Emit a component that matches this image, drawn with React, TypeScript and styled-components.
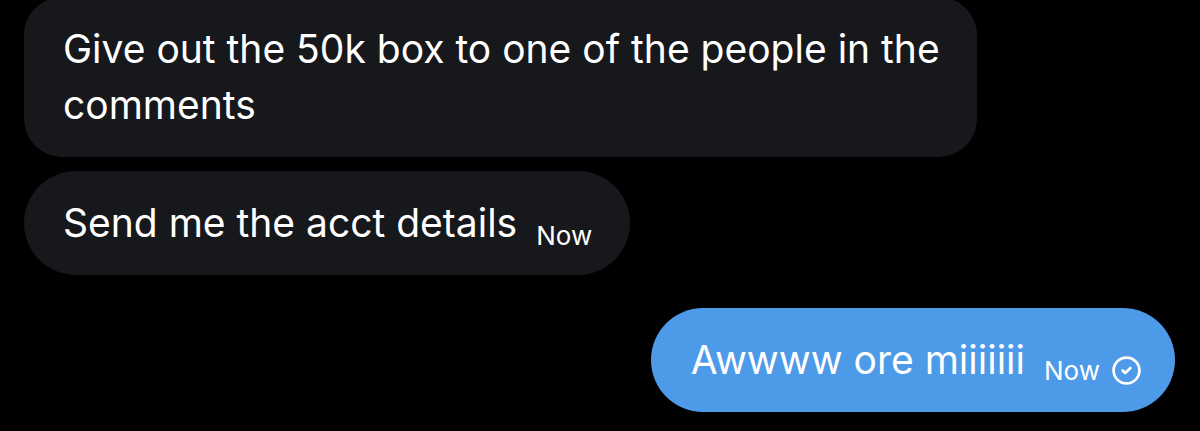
import React from "react";
import styled, { createGlobalStyle } from "styled-components";
import { CircleCheck } from "lucide-react";

const Global = createGlobalStyle`
  html, body {
    margin: 0;
    padding: 0;
    background: #000;
  }
  body {
    font-family: Inter, "Noto Sans", "Liberation Sans", sans-serif;
    -webkit-font-smoothing: antialiased;
  }
`;

const Thread = styled.div`
  display: flex;
  flex-direction: column;
  align-items: flex-start;
  padding: 0 25px 0 24px;
  margin-top: -3px;
  width: 1200px;
  height: 434px;
  box-sizing: border-box;
  overflow: hidden;
`;

const Bubble = styled.div<{ $mine?: boolean; $gap: number; $pill?: boolean; $padRight: number }>`
  box-sizing: border-box;
  max-width: 953px;
  margin-top: ${(p) => p.$gap}px;
  align-self: ${(p) => (p.$mine ? "flex-end" : "flex-start")};
  background: ${(p) => (p.$mine ? "#4c9ae8" : "#17181b")};
  color: #fff;
  border-radius: ${(p) => (p.$pill ? "53px" : "38px")};
  padding: 24px ${(p) => p.$padRight}px 24px ${(p) => (p.$mine ? 40 : 39)}px;
  display: flex;
  align-items: flex-end;
  gap: 19px;
`;

const Text = styled.span`
  font-size: 39px;
  line-height: 56px;
  letter-spacing: 0;
  font-weight: 400;
`;

const Meta = styled.span`
  display: flex;
  align-items: center;
  gap: 11px;
  font-size: 26px;
  line-height: 26px;
  padding-bottom: 2px;
  white-space: nowrap;
`;

export default function App() {
  return (
    <>
      <Global />
      <Thread>
        <Bubble $gap={0} $padRight={24}>
          <Text>Give out the 50k box to one of the people in the comments</Text>
        </Bubble>
        <Bubble $gap={14} $pill $padRight={38}>
          <Text>Send me the acct details</Text>
          <Meta>Now</Meta>
        </Bubble>
        <Bubble $gap={33} $pill $mine $padRight={33}>
          <Text>Awwww ore miiiiiii</Text>
          <Meta>
            Now
            <CircleCheck size={31} strokeWidth={2.1} color="#fff" />
          </Meta>
        </Bubble>
      </Thread>
    </>
  );
}
